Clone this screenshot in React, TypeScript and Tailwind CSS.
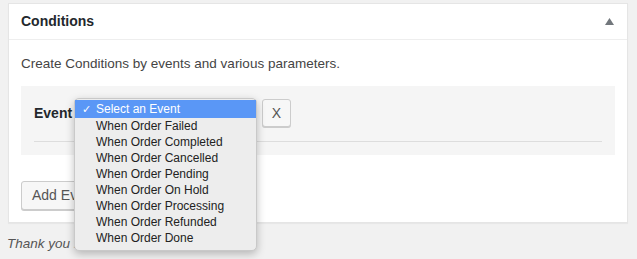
const events = [
  "When Order Failed",
  "When Order Completed",
  "When Order Cancelled",
  "When Order Pending",
  "When Order On Hold",
  "When Order Processing",
  "When Order Refunded",
  "When Order Done",
];

function EventMenu() {
  return (
    <div className="absolute left-[74px] top-[98px] w-[183px] h-[153px] rounded-[5px] border border-[#c9c9c9] bg-[#ededed] shadow-[0_3px_8px_rgba(0,0,0,0.25)] pt-[1px] text-[12px] text-[#222]">
      <div className="flex items-center h-[18px] bg-[#5a97f6] text-white">
        <span className="w-[21px] pl-[7px] text-[11px]">✓</span>
        <span>Select an Event</span>
      </div>
      {events.map((e) => (
        <div key={e} className="flex items-center h-[16px] pl-[21px]">
          {e}
        </div>
      ))}
    </div>
  );
}

export default function App() {
  return (
    <div
      className="relative w-[637px] h-[259px] bg-[#f1f1f1] overflow-hidden pl-[8px] pt-[3px]"
      style={{ fontFamily: '"Liberation Sans", Arial, sans-serif' }}
    >
      <div className="w-[620px] bg-white border border-[#e5e5e5] shadow-[0_1px_1px_rgba(0,0,0,0.04)]">
        <div className="flex items-center justify-between h-[36px] px-[12px] border-b border-[#eeeeee]">
          <h2 className="text-[14px] font-bold text-[#23282d]">Conditions</h2>
          <svg width="9" height="7" viewBox="0 0 9 7" className="mr-[1px]">
            <path d="M4.5 0 L9 7 L0 7 Z" fill="#72777c" />
          </svg>
        </div>
        <div className="px-[12px] pt-[14px] pb-[12px]">
          <p className="text-[13.5px] text-[#444] leading-[19px]">
            Create Conditions by events and various parameters.
          </p>
          <div className="mt-[13px] bg-[#f5f5f5] px-[13px] pt-[13px] pb-[13px]">
            <div className="flex items-center h-[28px]">
              <span className="text-[14px] font-bold text-[#23282d] w-[40px]">Event</span>
              <div className="w-[183px] h-[28px] border border-[#ddd] bg-white rounded-[3px]" />
              <button className="ml-[5px] w-[29px] h-[28px] border border-[#ccc] bg-[#f7f7f7] rounded-[3px] text-[14px] text-[#555] shadow-[0_1px_0_#ccc]">
                X
              </button>
            </div>
            <div className="mt-[14px] border-t border-[#dddddd]" />
          </div>
          <button className="mt-[26px] h-[29px] px-[10px] border border-[#ccc] bg-[#f7f7f7] rounded-[3px] text-[14px] text-[#555] shadow-[0_1px_0_#ccc]">
            Add Event
          </button>
        </div>
      </div>
      <p className="mt-[11px] -ml-[1px] text-[13.5px] italic text-[#555]">
        Thank you for creating with WordPress.
      </p>
      <EventMenu />
    </div>
  );
}
